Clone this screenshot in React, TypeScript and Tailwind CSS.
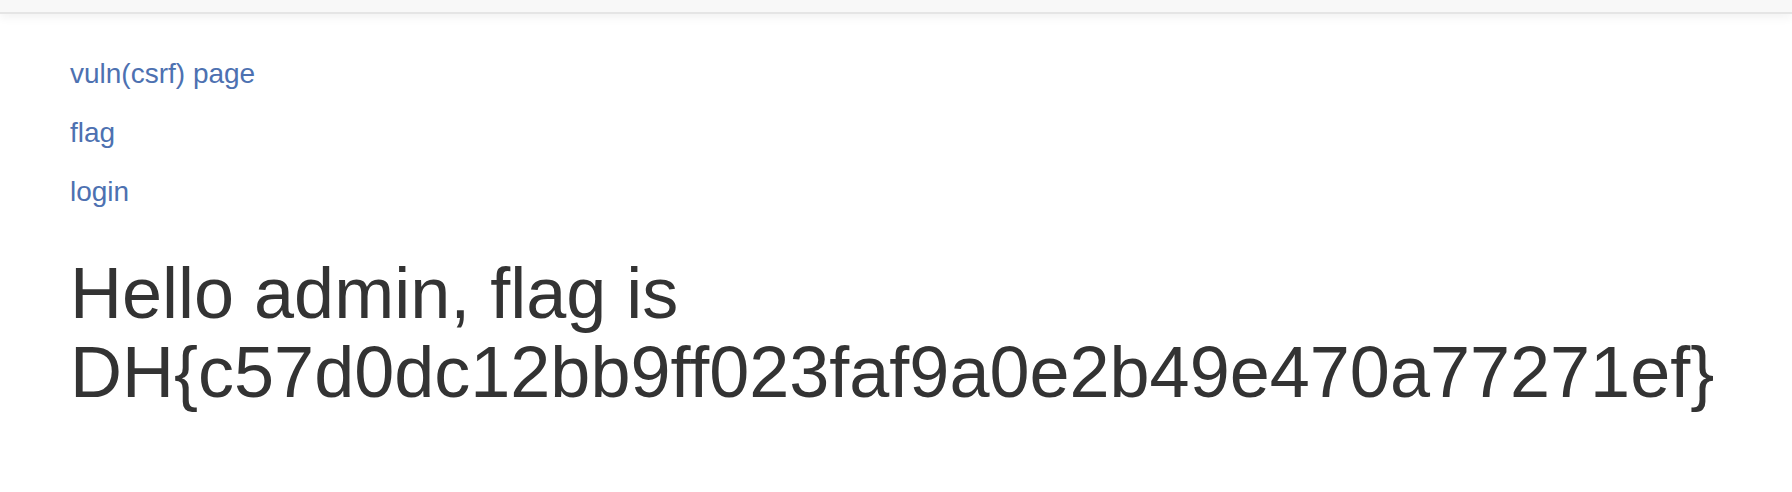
export default function App() {
    const links = ['vuln(csrf) page', 'flag', 'login'];

    return (
        <div className="min-h-screen bg-white font-['Liberation_Sans',Arial,sans-serif]">
            <div className="h-[14px] bg-[#f8f8f8] border-b-2 border-[#e5e5e5] shadow-[0_4px_10px_rgba(0,0,0,0.05)]" />

            <div className="pl-[70px] pt-[40px]">
                <div className="flex flex-col gap-[19px] text-[28px] leading-[40px]">
                    {links.map((label) => (
                        <a key={label} href="#" className="text-[#4d71b1] w-fit">
                            {label}
                        </a>
                    ))}
                </div>

                <h1 className="mt-[42px] text-[72px] leading-[79.2px] font-normal text-[#333333]">
                    Hello admin, flag is DH{'{'}c57d0dc12bb9ff023faf9a0e2b49e470a77271ef{'}'}
                </h1>
            </div>
        </div>
    );
}
